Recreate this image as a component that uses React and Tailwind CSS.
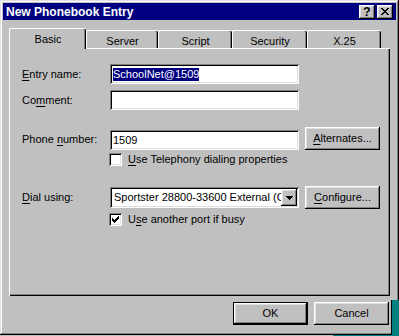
import React from "react";

const raised =
  "shadow-[inset_-1px_-1px_#000,inset_1px_1px_#fff,inset_-2px_-2px_#808080,inset_2px_2px_#dfdfdf]";
const sunken =
  "shadow-[inset_1px_1px_#808080,inset_-1px_-1px_#fff,inset_2px_2px_#000,inset_-2px_-2px_#dfdfdf]";

function Btn({ children, def = false }) {
  if (def) {
    return (
      <div className="w-[75px] h-[23px] border border-black bg-[#c0c0c0]">
        <div className={`w-full h-full flex items-center justify-center ${raised}`}>{children}</div>
      </div>
    );
  }
  return (
    <div className={`w-[75px] h-[23px] flex items-center justify-center bg-[#c0c0c0] ${raised}`}>
      {children}
    </div>
  );
}

function Tab({ label, w, selected }) {
  if (selected) {
    return (
      <div
        className="relative z-10 h-[21px] -mb-[1px] bg-[#c0c0c0] rounded-t-[2px] border-l border-t border-white flex justify-center pt-[4px] shadow-[inset_-1px_0_#000,inset_-2px_0_#808080]"
        style={{ width: w }}
      >
        {label}
      </div>
    );
  }
  return (
    <div
      className="h-[18px] bg-[#c0c0c0] rounded-t-[2px] border-l border-t border-white flex justify-center pt-[4px] shadow-[inset_-1px_0_#000,inset_-2px_0_#808080]"
      style={{ width: w }}
    >
      {label}
    </div>
  );
}

function Check({ checked }) {
  return (
    <div className={`w-[13px] h-[13px] bg-white relative ${sunken}`}>
      {checked && (
        <svg className="absolute left-[3px] top-[3px]" width="7" height="7" viewBox="0 0 7 7" shapeRendering="crispEdges">
          <path
            d="M6 0h1v3h-1zM5 1h1v3h-1zM4 2h1v3h-1zM0 2h1v3h-1zM1 3h1v3h-1zM2 4h1v3h-1zM3 3h1v3h-1z"
            fill="#000"
          />
        </svg>
      )}
    </div>
  );
}

function Label({ children }) {
  return <div className="w-[88px] shrink-0">{children}</div>;
}

function Edit({ children }) {
  return (
    <div className={`w-[189px] h-[20px] bg-white flex items-center pl-[3px] pr-[2px] overflow-hidden whitespace-nowrap ${sunken}`}>
      {children}
    </div>
  );
}

export default function App() {
  return (
    <div className="relative w-[399px] h-[336px] bg-[#c0c0c0] font-['Liberation_Sans',Arial,sans-serif] text-[11px] leading-[13px] text-black select-none">
      <div className="w-[399px] h-[335px] p-[3px] flex flex-col shadow-[inset_-1px_-1px_#000,inset_1px_1px_#dfdfdf,inset_-2px_-2px_#808080,inset_2px_2px_#fff]">
        {/* Title bar */}
        <div className="h-[17px] bg-[#000080] flex items-center justify-between pl-[3px] pr-[3px]">
          <span className="text-white font-bold text-[12px] leading-[14px]">New Phonebook Entry</span>
          <div className="flex gap-[2px]">
            <div className={`w-[16px] h-[14px] bg-[#c0c0c0] flex items-center justify-center font-bold text-[12px] leading-[12px] ${raised}`}>
              ?
            </div>
            <div className={`w-[16px] h-[14px] bg-[#c0c0c0] flex items-center justify-center ${raised}`}>
              <svg width="8" height="7" viewBox="0 0 8 7" shapeRendering="crispEdges">
                <path
                  d="M0 0h2v1h-2zM6 0h2v1h-2zM1 1h2v1h-2zM5 1h2v1h-2zM2 2h4v1h-4zM3 3h2v1h-2zM2 4h4v1h-4zM1 5h2v1h-2zM5 5h2v1h-2zM0 6h2v1h-2zM6 6h2v1h-2z"
                  fill="#000"
                />
              </svg>
            </div>
          </div>
        </div>

        {/* Tabs */}
        <div className="mt-[8px] ml-[6px] flex items-end h-[20px]">
          <Tab label="Basic" w={77} selected />
          <Tab label="Server" w={72} />
          <Tab label="Script" w={74} />
          <Tab label="Security" w={75} />
          <Tab label="X.25" w={74} />
        </div>

        {/* Panel */}
        <div className="ml-[6px] w-[381px] h-[248px] bg-[#c0c0c0] pl-[13px] pt-[16px] flex flex-col shadow-[inset_1px_1px_#fff,inset_-1px_-1px_#000,inset_-2px_-2px_#808080]">
          <div className="flex items-center h-[20px]">
            <Label>
              <u className="underline-offset-[2px]">E</u>ntry name:
            </Label>
            <Edit>
              <span className="bg-[#000080] text-white">SchoolNet@1509</span>
            </Edit>
          </div>
          <div className="flex items-center h-[20px] mt-[6px]">
            <Label>
              Co<u className="underline-offset-[2px]">m</u>ment:
            </Label>
            <Edit />
          </div>
          <div className="flex items-end h-[23px] mt-[17px]">
            <Label>
              <span className="relative -top-[4px]">
                Phone <u className="underline-offset-[2px]">n</u>umber:
              </span>
            </Label>
            <Edit>1509</Edit>
            <div className="ml-[6px]">
              <Btn>
                <u className="underline-offset-[2px]">A</u>lternates...
              </Btn>
            </div>
          </div>
          <div className="flex items-center h-[13px] mt-[3px] ml-[87px]">
            <Check />
            <span className="ml-[6px]">
              <u className="underline-offset-[2px]">U</u>se Telephony dialing properties
            </span>
          </div>
          <div className="flex items-center h-[23px] mt-[20px]">
            <Label>
              <u className="underline-offset-[2px]">D</u>ial using:
            </Label>
            <div className={`w-[189px] h-[21px] bg-white flex items-center pl-[4px] pr-[2px] ${sunken}`}>
              <span className="flex-1 overflow-hidden whitespace-nowrap">Sportster 28800-33600 External (COM1)</span>
              <div className={`w-[16px] h-[17px] shrink-0 bg-[#c0c0c0] flex items-center justify-center ${raised}`}>
                <svg width="7" height="4" viewBox="0 0 7 4" shapeRendering="crispEdges">
                  <path d="M0 0h7v1h-7zM1 1h5v1h-5zM2 2h3v1h-3zM3 3h1v1h-1z" fill="#000" />
                </svg>
              </div>
            </div>
            <div className="ml-[6px]">
              <Btn>
                <u className="underline-offset-[2px]">C</u>onfigure...
              </Btn>
            </div>
          </div>
          <div className="flex items-center h-[13px] mt-[4px] ml-[87px]">
            <Check checked />
            <span className="ml-[6px]">
              U<u className="underline-offset-[2px]">s</u>e another port if busy
            </span>
          </div>
        </div>

        {/* Bottom buttons */}
        <div className="mt-[6px] mr-[7px] flex justify-end gap-[6px]">
          <Btn def>OK</Btn>
          <Btn>Cancel</Btn>
        </div>
      </div>
      <div className="absolute right-0 bottom-0 w-[8px] h-[36px] bg-[#008080] border-l border-black" />
      <div className="absolute left-[333px] right-0 bottom-0 h-[1px] bg-[#008080]" />
    </div>
  );
}
